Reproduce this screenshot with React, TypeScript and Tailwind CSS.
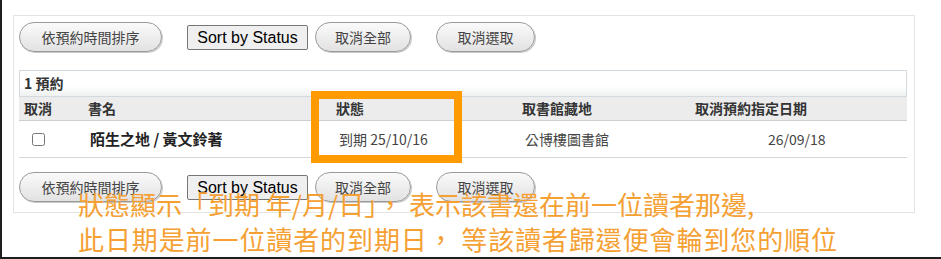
import React from 'react';

const cjk = { fontFamily: '"Noto Sans CJK TC", "Noto Sans", sans-serif' };

const PillButton: React.FC<{ label: string; className?: string }> = ({ label, className = '' }) => (
    <button
        type="button"
        style={cjk}
        className={`h-[30px] rounded-full border border-[#9a9a9a] bg-gradient-to-b from-[#fafafa] to-[#e2e2e2] text-[14px] text-[#444] shadow-[1px_1px_0_#c8c8c8] ${className}`}
    >
        {label}
    </button>
);

const ButtonRow: React.FC = () => (
    <div className="flex items-center">
        <PillButton label="依預約時間排序" className="w-[143px]" />
        <button
            type="button"
            style={{ fontFamily: '"Liberation Sans", Arial, sans-serif' }}
            className="ml-[25px] h-[25px] w-[121px] rounded-[2px] border border-[#767676] bg-[#efefef] text-[16px] text-black"
        >
            Sort by Status
        </button>
        <PillButton label="取消全部" className="ml-[7px] w-[96px]" />
        <PillButton label="取消選取" className="ml-[25px] w-[99px]" />
    </div>
);

const cols = 'grid grid-cols-[65px_247px_187px_173px_216px]';

const App: React.FC = () => {
    return (
        <div className="relative h-[259px] w-[941px] overflow-hidden border-b-2 border-l-2 border-[#1e1e1e] bg-white" style={cjk}>
            <div className="ml-[11px] mt-[15px] h-[198px] w-[902px] border border-[#e4e4e4] px-[5px] pt-[6px]">
                <ButtonRow />

                <div className="mt-[18px] w-[888px]">
                    <div className="flex h-[27px] items-center border border-[#d3dadf] bg-gradient-to-b from-white from-60% to-[#eef0f1] pl-[4px] text-[14px] font-bold text-[#333]">
                        1 預約
                    </div>
                    <div className={`${cols} h-[24px] items-center border-b border-[#cfcfcf] bg-[#ececec] text-[14px] font-bold text-[#333]`}>
                        <div className="pl-[5px]">取消</div>
                        <div className="pl-[4px]">書名</div>
                        <div className="pl-[5px]">狀態</div>
                        <div className="pl-[4px]">取書館藏地</div>
                        <div className="pl-[4px]">取消預約指定日期</div>
                    </div>
                    <div className={`${cols} h-[37px] items-center border-b border-[#d6d6d6] text-[14px] text-[#444]`}>
                        <div className="pl-[13px]">
                            <input type="checkbox" className="block h-[13px] w-[13px]" />
                        </div>
                        <div className="pl-[6px] text-[15px] font-bold text-[#222]">陌生之地 / 黃文鈴著</div>
                        <div className="pl-[8px]">到期 25/10/16</div>
                        <div className="pl-[7px]">公博樓圖書館</div>
                        <div className="pl-[77px]">26/09/18</div>
                    </div>
                </div>

                <div className="mt-[14px]">
                    <ButtonRow />
                </div>
            </div>

            {/* highlight on the status column */}
            <div className="absolute left-[309px] top-[91px] h-[72px] w-[151px] border-8 border-[#ff9a00]" />

            {/* annotation */}
            <div className="absolute left-[76px] top-[186px] text-[26px] leading-[35px] text-[#f5a033]">
                <div className="tracking-[0px]">狀態顯示「到期 年/月/日」， 表示該書還在前一位讀者那邊,</div>
                <div className="tracking-[0.9px]">此日期是前一位讀者的到期日， 等該讀者歸還便會輪到您的順位</div>
            </div>
        </div>
    );
};

export default App;
